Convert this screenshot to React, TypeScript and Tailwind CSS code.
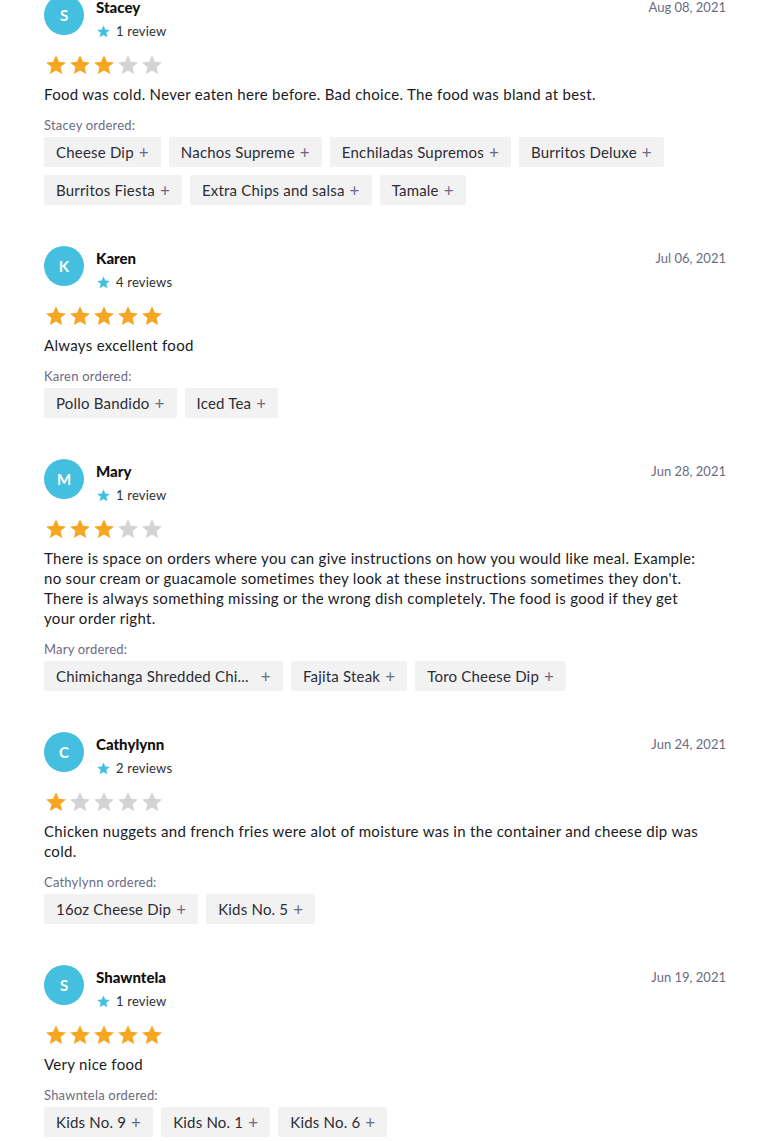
const reviews = [
  {
    name: 'Stacey',
    count: '1 review',
    date: 'Aug 08, 2021',
    rating: 3,
    text: 'Food was cold. Never eaten here before. Bad choice. The food was bland at best.',
    items: ['Cheese Dip', 'Nachos Supreme', 'Enchiladas Supremos', 'Burritos Deluxe', 'Burritos Fiesta', 'Extra Chips and salsa', 'Tamale'],
  },
  {
    name: 'Karen',
    count: '4 reviews',
    date: 'Jul 06, 2021',
    rating: 5,
    text: 'Always excellent food',
    items: ['Pollo Bandido', 'Iced Tea'],
  },
  {
    name: 'Mary',
    count: '1 review',
    date: 'Jun 28, 2021',
    rating: 3,
    text: "There is space on orders where you can give instructions on how you would like meal. Example: no sour cream or guacamole sometimes they look at these instructions sometimes they don't. There is always something missing or the wrong dish completely. The food is good if they get your order right.",
    items: ['Chimichanga Shredded Chi...', 'Fajita Steak', 'Toro Cheese Dip'],
  },
  {
    name: 'Cathylynn',
    count: '2 reviews',
    date: 'Jun 24, 2021',
    rating: 1,
    text: 'Chicken nuggets and french fries were alot of moisture was in the container and cheese dip was cold.',
    items: ['16oz Cheese Dip', 'Kids No. 5'],
  },
  {
    name: 'Shawntela',
    count: '1 review',
    date: 'Jun 19, 2021',
    rating: 5,
    text: 'Very nice food',
    items: ['Kids No. 9', 'Kids No. 1', 'Kids No. 6'],
  },
];

const Star = ({ className }: { className: string }) => (
  <svg viewBox="0 0 24 24" className={className}>
    <path
      fill="currentColor"
      d="M12 2.2l2.9 6.6 7.1.6-5.4 4.7 1.6 7-6.2-3.7-6.2 3.7 1.6-7L2 9.4l7.1-.6z"
    />
  </svg>
);

const Chip = ({ label }: { label: string }) => (
  <button className="flex h-[30px] items-center rounded-[2px] bg-[#f2f2f3] px-3 text-[15px] tracking-[0.2px] text-[#2d2d33]">
    <span>{label}</span>
    <span
      className={
        label.endsWith('...')
          ? 'ml-[12px] text-[17px] leading-none text-[#6b6b83]'
          : 'ml-[5px] text-[17px] leading-none text-[#6b6b83]'
      }
    >
      +
    </span>
  </button>
);

const App = () => (
  <div className="min-h-screen bg-white px-[44px] font-['Lato',sans-serif] text-[#2d2d33]">
    {reviews.map((r, i) => (
      <section key={r.name} className={i === 0 ? '-mt-[5px] pb-[41px]' : 'pb-[41px]'}>
        <div className="flex items-start">
          <div className="flex h-10 w-10 shrink-0 items-center justify-center rounded-full bg-[#45bfdf] text-[15px] font-bold text-white">
            {r.name[0]}
          </div>
          <div className="ml-3 flex-1">
            <div className="mt-[2px] text-[15px] font-black leading-5 text-[#111]">{r.name}</div>
            <div className="mt-[4px] flex items-center text-[13px] leading-5 tracking-[0.2px] text-[#2d2d33]">
              <Star className="mr-[5px] h-[15px] w-[15px] text-[#45bfdf]" />
              {r.count}
            </div>
          </div>
          <div className="mt-[2px] text-[13px] leading-5 text-[#6b6b83]">{r.date}</div>
        </div>

        <div className="mt-[12px] flex">
          {[1, 2, 3, 4, 5].map((n) => (
            <Star
              key={n}
              className={n <= r.rating ? 'h-6 w-6 text-[#f6a623]' : 'h-6 w-6 text-[#d3d3d5]'}
            />
          ))}
        </div>

        <p className="mt-[7px] max-w-[660px] text-[15px] leading-5 tracking-[0.3px] text-[#1a1a1f]">{r.text}</p>

        <div className="mt-[11px] text-[13px] leading-5 tracking-[0.2px] text-[#6b6b83]">{r.name} ordered:</div>
        <div className="mt-[2px] flex flex-wrap gap-2">
          {r.items.map((item) => (
            <Chip key={item} label={item} />
          ))}
        </div>
      </section>
    ))}
  </div>
);

export default App;
